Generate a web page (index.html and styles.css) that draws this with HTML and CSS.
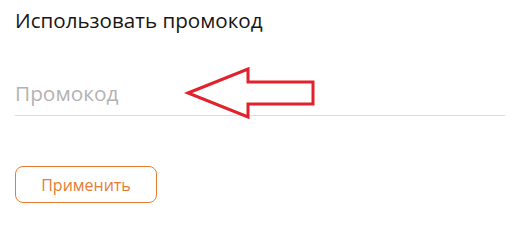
FILE: index.html
```html
<!DOCTYPE html>
<html lang="ru">
<head>
<meta charset="utf-8">
<link rel="stylesheet" href="styles.css">
</head>
<body>
<div class="promo">
  <h2 class="promo-title">Использовать промокод</h2>
  <div class="promo-field">
    <input class="promo-input" type="text" placeholder="Промокод">
  </div>
  <button class="promo-btn" type="button">Применить</button>
  <svg class="promo-arrow" width="520" height="215" viewBox="0 0 520 215">
    <polygon points="188,93 248,69 248,82 313,82 313,104 248,104 248,117" fill="none" stroke="#e1212b" stroke-width="3" stroke-linejoin="miter"/>
  </svg>
</div>
</body>
</html>
```
FILE: styles.css
```css
html, body {
  margin: 0;
  padding: 0;
  background: #ffffff;
}
body {
  font-family: "Open Sans", "Liberation Sans", sans-serif;
}
.promo {
  position: relative;
  width: 490px;
  padding: 6px 15px 0 15px;
  height: 209px;
}
.promo-title {
  margin: 0;
  font-size: 20.6px;
  font-weight: 400;
  line-height: 28px;
  color: #161616;
}
.promo-field {
  margin-top: 44px;
  border-bottom: 1px solid #dcdcdc;
}
.promo-input {
  display: block;
  width: 100%;
  box-sizing: border-box;
  border: none;
  outline: none;
  padding: 0 0 8px 0;
  height: 37px;
  font-family: inherit;
  font-size: 20.8px;
  color: #333;
  background: transparent;
}
.promo-input::placeholder {
  color: #b3b3b3;
}
.promo-btn {
  display: block;
  margin-top: 50px;
  width: 142px;
  height: 37px;
  box-sizing: border-box;
  border: 1px solid #e67c33;
  border-radius: 8px;
  background: #fff;
  color: #e67c33;
  font-family: inherit;
  font-size: 16px;
  padding: 0;
}
.promo-arrow {
  position: absolute;
  left: 0;
  top: 0;
  pointer-events: none;
}
```
